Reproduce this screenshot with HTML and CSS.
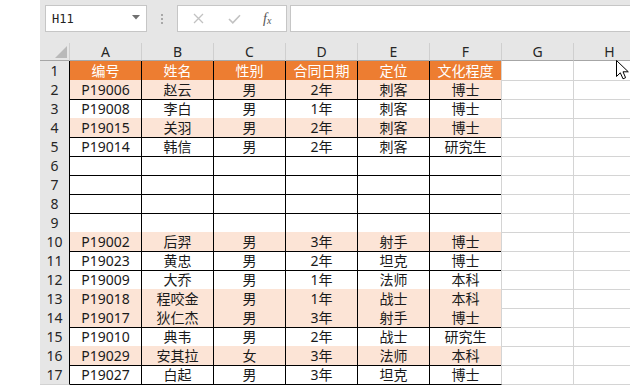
FILE: index.html
```html
<!DOCTYPE html>
<html lang="zh-CN">
<head>
    <meta charset="UTF-8">
    <title>Sheet1</title>
    <link rel="stylesheet" href="styles.css">
</head>
<body>
    <div class="app">
        <div class="formula-bar">
            <div class="name-box">
                <span class="name-text">H11</span>
                <svg class="caret" width="8" height="5" viewBox="0 0 8 5"><path d="M0 0 H8 L4 4.5 Z" fill="#707070"/></svg>
            </div>
            <div class="grip"><span></span><span></span><span></span></div>
            <div class="fx-box">
                <svg class="icon" width="11" height="11" viewBox="0 0 11 11"><path d="M1 1 L10 10 M10 1 L1 10" stroke="#c2c2c2" stroke-width="1.3" fill="none"/></svg>
                <svg class="icon" width="13" height="10" viewBox="0 0 13 10"><path d="M1 5 L4.8 8.8 L12 1.2" stroke="#c2c2c2" stroke-width="1.6" fill="none"/></svg>
                <span class="fx"><i>f</i><sub>x</sub></span>
            </div>
            <div class="formula-input"></div>
        </div>

        <div class="sheet">
            <div class="row head">
                <div class="corner"><span class="tri"></span></div>
                <div class="col-h">A</div>
                <div class="col-h">B</div>
                <div class="col-h">C</div>
                <div class="col-h">D</div>
                <div class="col-h">E</div>
                <div class="col-h">F</div>
                <div class="col-h">G</div>
                <div class="col-h">H</div>
            </div>
        </div>
    </div>

    <svg class="cursor" width="14" height="20" viewBox="0 0 14 20">
        <path d="M0.5 0.5 L0.5 16.5 L4.3 12.8 L7 18.8 L9.6 17.7 L7 11.8 L12.3 11.8 Z" fill="#fff" stroke="#000" stroke-width="1"/>
    </svg>

    <script>
        const rows = [
            ['编号', '姓名', '性别', '合同日期', '定位', '文化程度'],
            ['P19006', '赵云', '男', '2年', '刺客', '博士'],
            ['P19008', '李白', '男', '1年', '刺客', '博士'],
            ['P19015', '关羽', '男', '2年', '刺客', '博士'],
            ['P19014', '韩信', '男', '2年', '刺客', '研究生'],
            [], [], [], [],
            ['P19002', '后羿', '男', '3年', '射手', '博士'],
            ['P19023', '黄忠', '男', '2年', '坦克', '博士'],
            ['P19009', '大乔', '男', '1年', '法师', '本科'],
            ['P19018', '程咬金', '男', '1年', '战士', '本科'],
            ['P19017', '狄仁杰', '男', '3年', '射手', '博士'],
            ['P19010', '典韦', '男', '2年', '战士', '研究生'],
            ['P19029', '安其拉', '女', '3年', '法师', '本科'],
            ['P19027', '白起', '男', '3年', '坦克', '博士']
        ];
        // rows with the peach band
        const shaded = [2, 4, 10, 13, 14, 16];
        const sheet = document.querySelector('.sheet');

        rows.forEach(function(data, i) {
            const n = i + 1;
            const row = document.createElement('div');
            row.className = 'row';
            if (n === 1) row.classList.add('title');
            if (shaded.includes(n)) row.classList.add('shaded');

            const num = document.createElement('div');
            num.className = 'row-h';
            num.textContent = n;
            row.appendChild(num);

            for (let c = 0; c < 8; c++) {
                const cell = document.createElement('div');
                cell.className = c < 6 ? 'cell t' : 'cell';
                if (c === 5) cell.classList.add('last');
                cell.textContent = data[c] || '';
                row.appendChild(cell);
            }
            sheet.appendChild(row);
        });
    </script>
</body>
</html>
```

FILE: styles.css
```css
body {
    margin: 0;
    background-color: #ffffff;
    font-family: "Noto Sans", "Noto Sans CJK SC", sans-serif;
    font-size: 14px;
    color: #1a1a1a;
    overflow: hidden;
}
.app {
    margin-left: 40px;
    width: 590px;
    height: 386px;
    overflow: hidden;
}
.formula-bar {
    height: 43px;
    background-color: #e6e6e6;
    display: flex;
    align-items: flex-start;
    padding: 5px 0 0 5px;
    box-sizing: border-box;
}
.name-box {
    width: 102px;
    height: 27px;
    box-sizing: border-box;
    background-color: #fff;
    border: 1px solid #c6c6c6;
    display: flex;
    align-items: center;
    justify-content: space-between;
    padding: 0 6px 0 6px;
}
.name-text {
    font-family: "DejaVu Sans Mono", monospace;
    font-size: 12px;
    color: #222;
}
.caret {
    margin-top: -2px;
}
.grip {
    width: 30px;
    height: 27px;
    display: flex;
    flex-direction: column;
    align-items: center;
    justify-content: center;
    gap: 2px;
}
.grip span {
    width: 2px;
    height: 2px;
    background-color: #a8a8a8;
}
.fx-box {
    width: 110px;
    height: 27px;
    box-sizing: border-box;
    background-color: #fff;
    border: 1px solid #c6c6c6;
    display: flex;
    align-items: center;
    padding: 0 0 0 15px;
    gap: 24px;
}
.fx {
    font-family: "Liberation Serif", serif;
    font-size: 14px;
    color: #555;
    margin-left: -2px;
}
.fx sub {
    font-size: 10px;
    font-style: italic;
    vertical-align: -1px;
}
.formula-input {
    flex: 1;
    height: 27px;
    box-sizing: border-box;
    margin-left: 3px;
    background-color: #fff;
    border: 1px solid #c6c6c6;
    border-right: none;
}
.sheet {
    display: flex;
    flex-direction: column;
}
.row {
    display: grid;
    grid-template-columns: 30px repeat(8, 72px);
    height: 19px;
}
.row.head {
    height: 18px;
    background-color: #e6e6e6;
}
.corner, .col-h {
    box-sizing: border-box;
    border-right: 1px solid #cfcfcf;
    border-bottom: 1px solid #a6a6a6;
    text-align: center;
    line-height: 17px;
    color: #262626;
    position: relative;
}
.tri {
    position: absolute;
    right: 2px;
    bottom: 2px;
    width: 0;
    height: 0;
    border-left: 12px solid transparent;
    border-bottom: 12px solid #b9b9b9;
}
.row-h {
    box-sizing: border-box;
    background-color: #e6e6e6;
    border-right: 1px solid #000;
    border-bottom: 1px solid #d2d2d2;
    text-align: center;
    line-height: 19px;
    color: #262626;
}
.cell {
    box-sizing: border-box;
    border-right: 1px solid #d4d4d4;
    border-bottom: 1px solid #d4d4d4;
    text-align: center;
    line-height: 19px;
    white-space: nowrap;
    overflow: hidden;
}
.cell.t {
    border-right-color: #000;
    border-bottom-color: #000;
}
.cell.t.last {
    border-right-color: #d4d4d4;
}
.shaded .cell.t {
    background-color: #fce4d6;
}
.title .cell.t {
    background-color: #ed7d31;
    color: #ffffff;
}
.cursor {
    position: absolute;
    left: 616px;
    top: 60px;
}
```
